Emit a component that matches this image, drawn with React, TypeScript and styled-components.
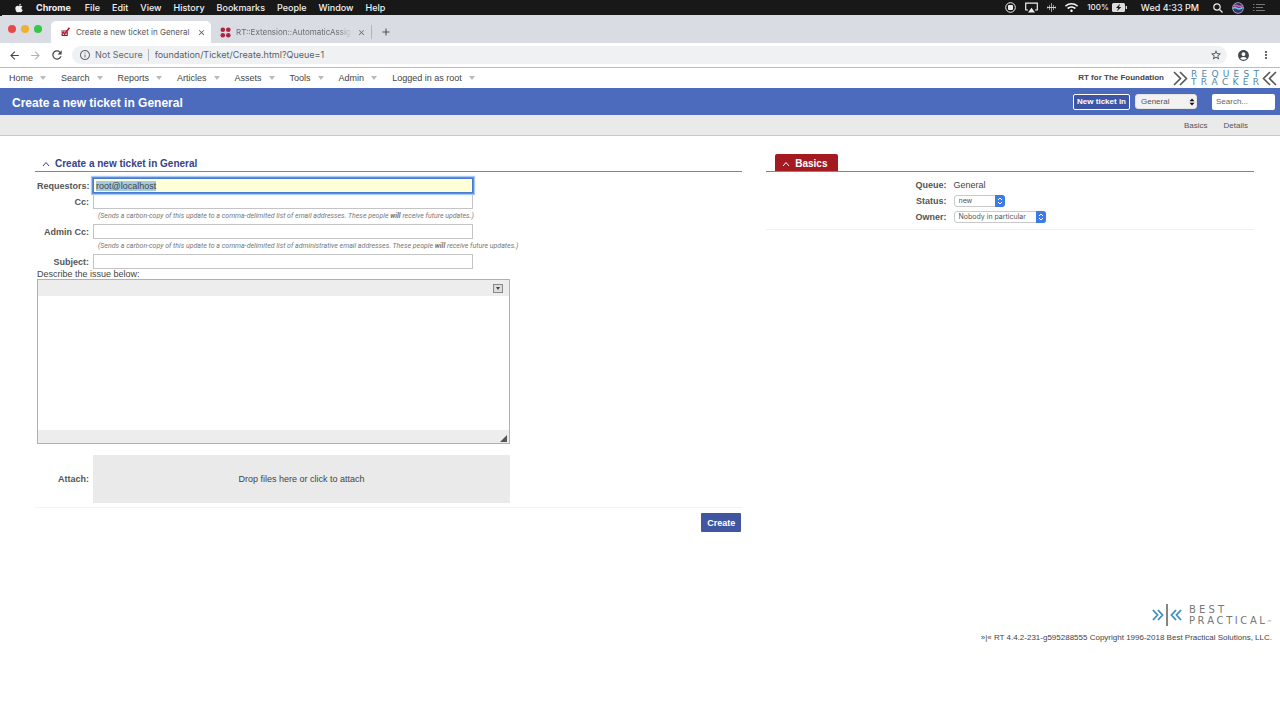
import React from "react";
import styled, { createGlobalStyle, css } from "styled-components";
import { FaApple, FaWifi } from "react-icons/fa";
import { MdAccountCircle, MdArrowBack, MdArrowForward, MdRefresh, MdStarBorder, MdMoreVert, MdInfoOutline, MdClose, MdAdd } from "react-icons/md";

const ui = `Inter, Roboto, sans-serif`;
const page = `"Liberation Sans", Arial, sans-serif`;

const GlobalStyle = createGlobalStyle`
  *, *::before, *::after { box-sizing: border-box; }
  body { margin: 0; background: #fff; color: #444; font: 9px/12px ${page}; }
  button, input, select, textarea { font: inherit; color: inherit; margin: 0; }
  a { color: inherit; text-decoration: none; }
  svg { display: block; flex: none; }
`;

const Screen = styled.div`
  display: flex;
  flex-direction: column;
  min-height: 100vh;
`;

/* ---- system menu bar ---- */
const MenuBar = styled.header`
  display: flex;
  align-items: center;
  height: 15px;
  padding: 0 15px 0 14px;
  background: #181818;
  color: #f2f2f2;
  font: 500 9px/15px ${ui};
`;
const Menus = styled.nav`
  display: flex;
  align-items: center;
  gap: 12px;
  flex: 1;
`;
const MenuName = styled.span<{ $app?: boolean }>`
  font-weight: ${(p) => (p.$app ? 700 : 500)};
  padding-right: ${(p) => (p.$app ? 2 : 0)}px;
`;
const StatusItems = styled.div`
  display: flex;
  align-items: center;
  gap: 14px;
`;
const StatusGroup = styled.div<{ $gap: number }>`
  display: flex;
  align-items: center;
  gap: ${(p) => p.$gap}px;
`;
const Charge = styled.span`
  font-size: 8px;
  margin-right: -6px;
`;

/* ---- browser chrome ---- */
const TabStrip = styled.div`
  display: flex;
  align-items: flex-end;
  height: 28px;
  padding-left: 8px;
  background: linear-gradient(#181818, #181818) 0 0 / 2px 1px no-repeat, #d9dce3;
  font: 8px/12px ${ui};
`;
const Lights = styled.div`
  display: flex;
  align-items: center;
  gap: 5px;
  height: 28px;
  margin-right: 9px;
`;
const Light = styled.span<{ $color: string }>`
  width: 8px;
  height: 8px;
  border-radius: 50%;
  background: ${(p) => p.$color};
`;
const Tab = styled.div<{ $active?: boolean }>`
  display: flex;
  align-items: center;
  gap: 5px;
  width: 160px;
  height: 22px;
  padding: 0 5px 0 9px;
  border-radius: 5px 5px 0 0;
  color: #6a6d71;
  ${(p) => p.$active && css`background: #fff; color: #55585c;`}
`;
const TabTitle = styled.span<{ $fade?: boolean }>`
  flex: 1;
  min-width: 0;
  white-space: nowrap;
  ${(p) => p.$fade && css`mask-image: linear-gradient(90deg, #000 88%, transparent);`}
`;
const GhostButton = styled.button`
  display: flex;
  align-items: center;
  padding: 0;
  border: 0;
  background: none;
`;
const NewTab = styled.div`
  display: flex;
  align-items: center;
  height: 14px;
  margin-bottom: 4px;
  padding-left: 8px;
  border-left: 1px solid #b3b6bc;
  color: #4a4d51;
`;
const Toolbar = styled.div`
  display: flex;
  align-items: center;
  gap: 10px;
  height: 25px;
  padding: 0 8px;
  border-bottom: 1px solid #bdbdbd;
  color: #44474b;
`;
const NavIcons = styled.div`
  display: flex;
  gap: 8px;
  margin-right: -2px;
`;
const AddressBar = styled.div`
  display: flex;
  align-items: center;
  flex: 1;
  height: 18px;
  padding: 0 5px 0 7px;
  border-radius: 9px;
  background: #f0f1f3;
  font: 9px/12px ${ui};
`;
const Security = styled.span`
  display: flex;
  align-items: center;
  gap: 4px;
  margin-right: 6px;
  padding-right: 5px;
  border-right: 1px solid #b5b7ba;
  color: #65686c;
`;
const Url = styled.input`
  flex: 1;
  min-width: 0;
  padding: 0;
  border: 0;
  outline: 0;
  background: none;
  color: #5b5e62;
`;

/* ---- application header ---- */
const AppNav = styled.nav`
  display: flex;
  align-items: center;
  height: 20px;
  padding: 0 3px 0 9px;
`;
const NavItem = styled.a`
  display: flex;
  align-items: center;
  gap: 7px;
  margin-right: 15px;
`;
const Caret = styled.span`
  border: 3px solid transparent;
  border-top: 4px solid #bbb;
  border-bottom: 0;
`;
const Brand = styled.div`
  display: flex;
  align-items: center;
  gap: 9px;
  margin-left: auto;
  font: bold 8px/12px ${page};
`;
const Logo = styled.div`
  display: flex;
  align-items: center;
  gap: 3px;
`;
const Wordmark = styled.div`
  color: #4f87a9;
  font: 9px/8px "DejaVu Sans", sans-serif;
`;
const WordLine = styled.div<{ $width: number }>`
  display: flex;
  justify-content: space-between;
  width: ${(p) => p.$width}px;
`;
const TitleBand = styled.div`
  display: flex;
  align-items: center;
  gap: 5px;
  height: 27px;
  padding: 0 5px 0 12px;
  background: #4d6bbd;
  font-size: 8px;
`;
const PageTitle = styled.h1`
  flex: 1;
  margin: 2px 0 0;
  color: #fff;
  font-size: 12px;
  line-height: 14px;
`;
const NewTicket = styled.button`
  height: 16px;
  padding: 0 3px;
  border: 1px solid #fff;
  border-radius: 2px;
  background: #3c55a4;
  color: #fff;
  font-weight: bold;
  line-height: 14px;
`;
const SearchBox = styled.input`
  width: 63px;
  height: 16px;
  margin-left: 10px;
  padding: 0 4px;
  border: 0;
  border-radius: 2px;
  background: #fff;
  &::placeholder { color: #666; opacity: 1; }
`;
const SubNav = styled.nav`
  display: flex;
  justify-content: flex-end;
  align-items: center;
  gap: 16px;
  height: 21px;
  padding: 2px 32px 0 0;
  border-bottom: 1px solid #c8c8c8;
  background: #eaeaea;
  color: #555;
  font-size: 8px;
`;

/* ---- drop-downs ---- */
const SelectWrap = styled.span`
  position: relative;
  display: flex;
  justify-self: start;
`;
const PlainSelect = styled.select<{ $size: "header" | "field"; $width: number }>`
  appearance: none;
  width: ${(p) => p.$width}px;
  height: ${(p) => (p.$size === "header" ? 15 : 12)}px;
  padding: 0 10px 0 ${(p) => (p.$size === "header" ? 5 : 4)}px;
  border: 1px solid ${(p) => (p.$size === "header" ? "#e3e3e3" : "#c9c9c9")};
  border-radius: 3px;
  background: ${(p) => (p.$size === "header" ? "#f2f2f2" : "#fff")};
  color: #555;
  font: ${(p) => (p.$size === "header" ? `8px/12px ${page}` : `7px/10px ${ui}`)};
`;
const Arrows = styled.span<{ $blue?: boolean }>`
  position: absolute;
  top: 0;
  right: 0;
  bottom: 0;
  display: flex;
  align-items: center;
  justify-content: center;
  width: 10px;
  pointer-events: none;
  color: #111;
  ${(p) => p.$blue && css`background: #3c7be8; color: #fff; border-radius: 0 3px 3px 0;`}
`;

/* ---- ticket form ---- */
const Columns = styled.main`
  display: grid;
  grid-template-columns: 29fr 20fr;
  gap: 24px;
  align-items: start;
  padding: 18px 26px 0 35px;
`;
const PanelHeader = styled.div<{ $tab?: boolean }>`
  display: flex;
  height: 18px;
  padding-left: ${(p) => (p.$tab ? 9 : 7)}px;
  border-bottom: 1px solid #858585;
`;
const PanelTitle = styled.h2<{ $tab?: boolean }>`
  display: flex;
  align-items: center;
  gap: 5px;
  margin: 0;
  padding-top: 3px;
  font-size: 10px;
  line-height: 14px;
  color: #354288;
  ${(p) => p.$tab && css`
    padding: 3px 11px 0 7px;
    border-radius: 2px 2px 0 0;
    background: #a31b20;
    color: #fff;
  `}
`;
const TicketBody = styled.div`
  display: flex;
  flex-direction: column;
  gap: 1px;
  padding: 6px 0 0 2px;
`;
const Field = styled.div<{ $tall?: boolean }>`
  display: grid;
  grid-template-columns: 52px ${(p) => (p.$tall ? "417px" : "380px")};
  column-gap: 4px;
  align-items: center;
`;
const Label = styled.label`
  color: #555;
  font-weight: bold;
  text-align: right;
  white-space: nowrap;
`;
const TextBox = styled.input<{ $current?: boolean }>`
  width: 100%;
  height: 15px;
  padding: 0 2px;
  border: 1px solid #c4c4c4;
  outline: 0;
  background: #fff;
  ${(p) => p.$current && css`
    background: #ffffd8;
    border-color: #4a7bd0;
    box-shadow: 0 0 0 1px #5d8fe0, 0 0 1px 2px #a9cbf5;
    position: relative;
  `}
  &::selection { background: #a5cbe0; color: #444; }
`;
const Hint = styled.p`
  grid-column: 2;
  margin: 0 0 0 5px;
  color: #777;
  font: italic 7px/14px Roboto, sans-serif;
  white-space: nowrap;
`;
const IssueLabel = styled.label`
  line-height: 8px;
`;
const Editor = styled.div`
  display: flex;
  flex-direction: column;
  width: 473px;
  margin-bottom: 10px;
  border: 1px solid #b0b0b0;
`;
const EditorBar = styled.div<{ $bottom?: boolean }>`
  display: flex;
  align-items: center;
  justify-content: flex-end;
  height: ${(p) => (p.$bottom ? 13 : 16)}px;
  padding-right: ${(p) => (p.$bottom ? 2 : 6)}px;
  padding-top: ${(p) => (p.$bottom ? 3 : 0)}px;
  background: #ededed;
  color: #555;
`;
const EditorToggle = styled.button`
  display: flex;
  align-items: center;
  justify-content: center;
  width: 10px;
  height: 9px;
  padding: 0;
  border: 1px solid #888;
  background: #ddd;
`;
const EditorText = styled.textarea`
  height: 134px;
  padding: 4px;
  border: 0;
  outline: 0;
  resize: none;
`;
const DropZone = styled.button`
  height: 48px;
  padding: 0;
  border: 0;
  background: #eaeaea;
  color: #444;
`;
const Actions = styled.div`
  display: flex;
  justify-content: flex-end;
  margin-top: 4px;
  padding: 5px 1px 0 0;
  border-top: 1px solid #f2f2f2;
`;
const CreateButton = styled.button`
  height: 19px;
  padding: 0 6px;
  border: 0;
  border-radius: 1px;
  background: #4056a1;
  color: #fff;
  font-weight: bold;
`;
const BasicsBody = styled.div`
  display: grid;
  grid-template-columns: 3fr 5fr;
  grid-auto-rows: 16px;
  align-items: center;
  column-gap: 7px;
  padding: 5px 0 4px;
  border-bottom: 1px solid #f0f0f0;
`;

/* ---- footer ---- */
const Footer = styled.footer`
  display: flex;
  flex-direction: column;
  align-items: flex-end;
  gap: 5px;
  padding: 71px 8px 0;
  font-size: 8px;
`;
const Company = styled.div`
  display: flex;
  align-items: center;
  gap: 7px;
  color: #777;
  font: 10px/11px "DejaVu Sans", sans-serif;
`;
const CompanyName = styled.div`
  display: flex;
  flex-direction: column;
`;
const Mark = styled.span`
  align-self: flex-end;
  margin-left: -5px;
  font-size: 5px;
  line-height: 9px;
`;

const Chevrons = ({ flip }: { flip?: boolean }) => (
  <svg width="15" height="15" viewBox="0 0 15 15" fill="none" stroke="#555" strokeWidth="1.6">
    {flip ? <path d="M8 1 1.5 7.5 8 14M14 1 7.5 7.5 14 14" /> : <path d="M1 1 7.5 7.5 1 14M7 1 13.5 7.5 7 14" />}
  </svg>
);
const UpDown = ({ outline }: { outline?: boolean }) => (
  <svg width="6" height="8" viewBox="0 0 6 8" fill={outline ? "none" : "currentColor"} stroke={outline ? "currentColor" : "none"}>
    <path d={outline ? "M1 3 3 1 5 3M1 5 3 7 5 5" : "M0.5 3.3 3 .5 5.5 3.3ZM.5 4.7 3 7.5 5.5 4.7Z"} />
  </svg>
);
const Collapse = () => (
  <svg width="8" height="6" viewBox="0 0 8 6" fill="none" stroke="currentColor">
    <path d="M1 5 4 1.5 7 5" />
  </svg>
);

const spread = (word: string) => word.split("").map((c, i) => <span key={i}>{c}</span>);

function SystemMenu() {
  return (
    <MenuBar>
      <Menus>
        <FaApple size={10} />
        <MenuName $app>Chrome</MenuName>
        {["File", "Edit", "View", "History", "Bookmarks", "People", "Window", "Help"].map((m) => (
          <MenuName key={m}>{m}</MenuName>
        ))}
      </Menus>
      <StatusItems>
        <StatusGroup $gap={9}>
          <svg width="11" height="11" viewBox="0 0 11 11"><circle cx="5.5" cy="5.5" r="4.8" fill="none" stroke="#eee" /><rect x="3" y="3" width="5" height="5" rx="1" fill="#eee" /></svg>
          <svg width="13" height="11" viewBox="0 0 13 11"><path d="M3 8H.7V1.2h11.6V8H10" fill="none" stroke="#eee" strokeWidth="1.2" /><path d="M6.5 5.8 10 10.5H3Z" fill="#eee" /></svg>
          <svg width="9" height="11" viewBox="0 0 9 11" fill="none" stroke="#999"><path d="M4.5 1v9M2.5 3v5M6.5 3v5M.5 4.5v2M8.5 4.5v2" /><path d="M0 5.5h9" stroke="#ccc" /></svg>
          <FaWifi size={13} />
          <Charge>100%</Charge>
          <svg width="15" height="9" viewBox="0 0 15 9"><rect width="13" height="9" rx="1.5" fill="#ddd" /><rect x="13.7" y="3" width="1.3" height="3" fill="#ddd" /><path d="M8 .8 4 5h2.2L5 8.3 9.3 4H7Z" fill="#181818" /></svg>
        </StatusGroup>
        <span>Wed 4:33 PM</span>
        <StatusGroup $gap={9}>
          <svg width="10" height="10" viewBox="0 0 10 10" fill="none" stroke="#eee" strokeWidth="1.2"><circle cx="4" cy="4" r="3.2" /><path d="m6.5 6.5 3 3" /></svg>
          <svg width="12" height="12" viewBox="0 0 11 11"><circle cx="5.5" cy="5.5" r="5.3" fill="#b9b4d8" /><circle cx="5.5" cy="5.5" r="4.5" fill="#35306b" /><path d="M1.2 6C3 2.5 5 9 9.8 5" fill="none" stroke="#5ac8e8" strokeWidth="1.5" /><path d="M2 4c3-3 4 2 7-.5" fill="none" stroke="#dc5aa0" strokeWidth="1.5" /></svg>
          <svg width="12" height="9" viewBox="0 0 12 9" stroke="#777"><path d="M0 1.5h1.5M3 1.5h9M0 4.5h1.5M3 4.5h7M0 7.5h1.5M3 7.5h9" /></svg>
        </StatusGroup>
      </StatusItems>
    </MenuBar>
  );
}

function BrowserChrome() {
  return (
    <>
      <TabStrip>
        <Lights><Light $color="#e9494b" /><Light $color="#efb034" /><Light $color="#35c748" /></Lights>
        <Tab $active>
          <svg width="11" height="10" viewBox="0 0 11 10" fill="none"><path d="M1.2 4h6.6M7.2 5v3.5H2.2V5" stroke="#7c2530" strokeWidth="1.2" /><path d="M2.8 4.8 4.6 7 9.5.8" stroke="#c51f32" strokeWidth="1.8" /></svg>
          <TabTitle>Create a new ticket in General</TabTitle>
          <GhostButton aria-label="Close tab"><MdClose size={9} /></GhostButton>
        </Tab>
        <Tab>
          <svg width="11" height="11" viewBox="0 0 11 11" fill="#b3223f"><circle cx="2.8" cy="2.8" r="2.3" /><circle cx="8.3" cy="2.8" r="2.3" /><circle cx="2.8" cy="8.3" r="2.3" /><circle cx="8.3" cy="8.3" r="2.3" /></svg>
          <TabTitle $fade>RT::Extension::AutomaticAssig</TabTitle>
          <GhostButton aria-label="Close tab"><MdClose size={9} /></GhostButton>
        </Tab>
        <NewTab><GhostButton aria-label="New tab"><MdAdd size={12} /></GhostButton></NewTab>
      </TabStrip>
      <Toolbar>
        <NavIcons>
          <GhostButton aria-label="Back"><MdArrowBack size={13} /></GhostButton>
          <GhostButton aria-label="Forward"><MdArrowForward size={13} color="#b0b2b5" /></GhostButton>
          <GhostButton aria-label="Reload"><MdRefresh size={14} /></GhostButton>
        </NavIcons>
        <AddressBar>
          <Security><MdInfoOutline size={12} />Not Secure</Security>
          <Url aria-label="Address" defaultValue="foundation/Ticket/Create.html?Queue=1" />
          <MdStarBorder size={12} />
        </AddressBar>
        <MdAccountCircle size={13} />
        <MdMoreVert size={12} />
      </Toolbar>
    </>
  );
}

function AppHeader() {
  return (
    <>
      <AppNav>
        {["Home", "Search", "Reports", "Articles", "Assets", "Tools", "Admin", "Logged in as root"].map((n) => (
          <NavItem href="#" key={n}>{n}<Caret /></NavItem>
        ))}
        <Brand>
          RT for The Foundation
          <Logo>
            <Chevrons />
            <Wordmark><WordLine $width={68}>{spread("REQUEST")}</WordLine><WordLine $width={68}>{spread("TRACKER")}</WordLine></Wordmark>
            <Chevrons flip />
          </Logo>
        </Brand>
      </AppNav>
      <TitleBand>
        <PageTitle>Create a new ticket in General</PageTitle>
        <NewTicket>New ticket in</NewTicket>
        <SelectWrap>
          <PlainSelect $size="header" $width={62} aria-label="Queue for new ticket"><option>General</option></PlainSelect>
          <Arrows><UpDown /></Arrows>
        </SelectWrap>
        <SearchBox aria-label="Search" placeholder="Search..." />
      </TitleBand>
      <SubNav><a href="#basics">Basics</a><a href="#details">Details</a></SubNav>
    </>
  );
}

function TicketForm() {
  return (
    <section>
      <PanelHeader><PanelTitle><Collapse />Create a new ticket in General</PanelTitle></PanelHeader>
      <TicketBody>
        <Field>
          <Label htmlFor="requestors">Requestors:</Label>
          <TextBox id="requestors" $current autoFocus onFocus={(e) => e.currentTarget.select()} defaultValue="root@localhost" />
        </Field>
        <Field>
          <Label htmlFor="cc">Cc:</Label>
          <TextBox id="cc" />
          <Hint>(Sends a carbon-copy of this update to a comma-delimited list of email addresses. These people <b>will</b> receive future updates.)</Hint>
        </Field>
        <Field>
          <Label htmlFor="admincc">Admin Cc:</Label>
          <TextBox id="admincc" />
          <Hint>(Sends a carbon-copy of this update to a comma-delimited list of administrative email addresses. These people <b>will</b> receive future updates.)</Hint>
        </Field>
        <Field>
          <Label htmlFor="subject">Subject:</Label>
          <TextBox id="subject" />
        </Field>
        <IssueLabel htmlFor="issue">Describe the issue below:</IssueLabel>
        <Editor>
          <EditorBar>
            <EditorToggle aria-label="Show toolbar"><svg width="4" height="3" viewBox="0 0 4 3"><path d="M0 0h4L2 3Z" fill="#444" /></svg></EditorToggle>
          </EditorBar>
          <EditorText id="issue" />
          <EditorBar $bottom><svg width="7" height="7" viewBox="0 0 7 7"><path d="M7 0v7H0Z" fill="#555" /></svg></EditorBar>
        </Editor>
        <Field $tall>
          <Label htmlFor="attach">Attach:</Label>
          <DropZone id="attach">Drop files here or click to attach</DropZone>
        </Field>
      </TicketBody>
      <Actions><CreateButton>Create</CreateButton></Actions>
    </section>
  );
}

function Basics() {
  return (
    <section>
      <PanelHeader $tab><PanelTitle $tab><Collapse />Basics</PanelTitle></PanelHeader>
      <BasicsBody>
        <Label as="span">Queue:</Label>
        <span>General</span>
        <Label htmlFor="status">Status:</Label>
        <SelectWrap>
          <PlainSelect id="status" $size="field" $width={51}><option>new</option></PlainSelect>
          <Arrows $blue><UpDown outline /></Arrows>
        </SelectWrap>
        <Label htmlFor="owner">Owner:</Label>
        <SelectWrap>
          <PlainSelect id="owner" $size="field" $width={92}><option>Nobody in particular</option></PlainSelect>
          <Arrows $blue><UpDown outline /></Arrows>
        </SelectWrap>
      </BasicsBody>
    </section>
  );
}

export default function App() {
  return (
    <Screen>
      <GlobalStyle />
      <SystemMenu />
      <BrowserChrome />
      <AppHeader />
      <Columns>
        <TicketForm />
        <Basics />
      </Columns>
      <Footer>
        <Company>
          <svg width="30" height="24" viewBox="0 0 30 24" fill="none" stroke="#3d8cc4" strokeWidth="1.8"><path d="M1 7 5.5 12 1 17M6 7 10.5 12 6 17M24 7 19.5 12 24 17M29 7 24.5 12 29 17" /><path d="M15 1v22" stroke="#777" /></svg>
          <CompanyName><WordLine $width={35}>{spread("BEST")}</WordLine><WordLine $width={76}>{spread("PRACTICAL")}</WordLine></CompanyName>
          <Mark>™</Mark>
        </Company>
        <span>»|« RT 4.4.2-231-g595288555 Copyright 1996-2018 Best Practical Solutions, LLC.</span>
      </Footer>
    </Screen>
  );
}
